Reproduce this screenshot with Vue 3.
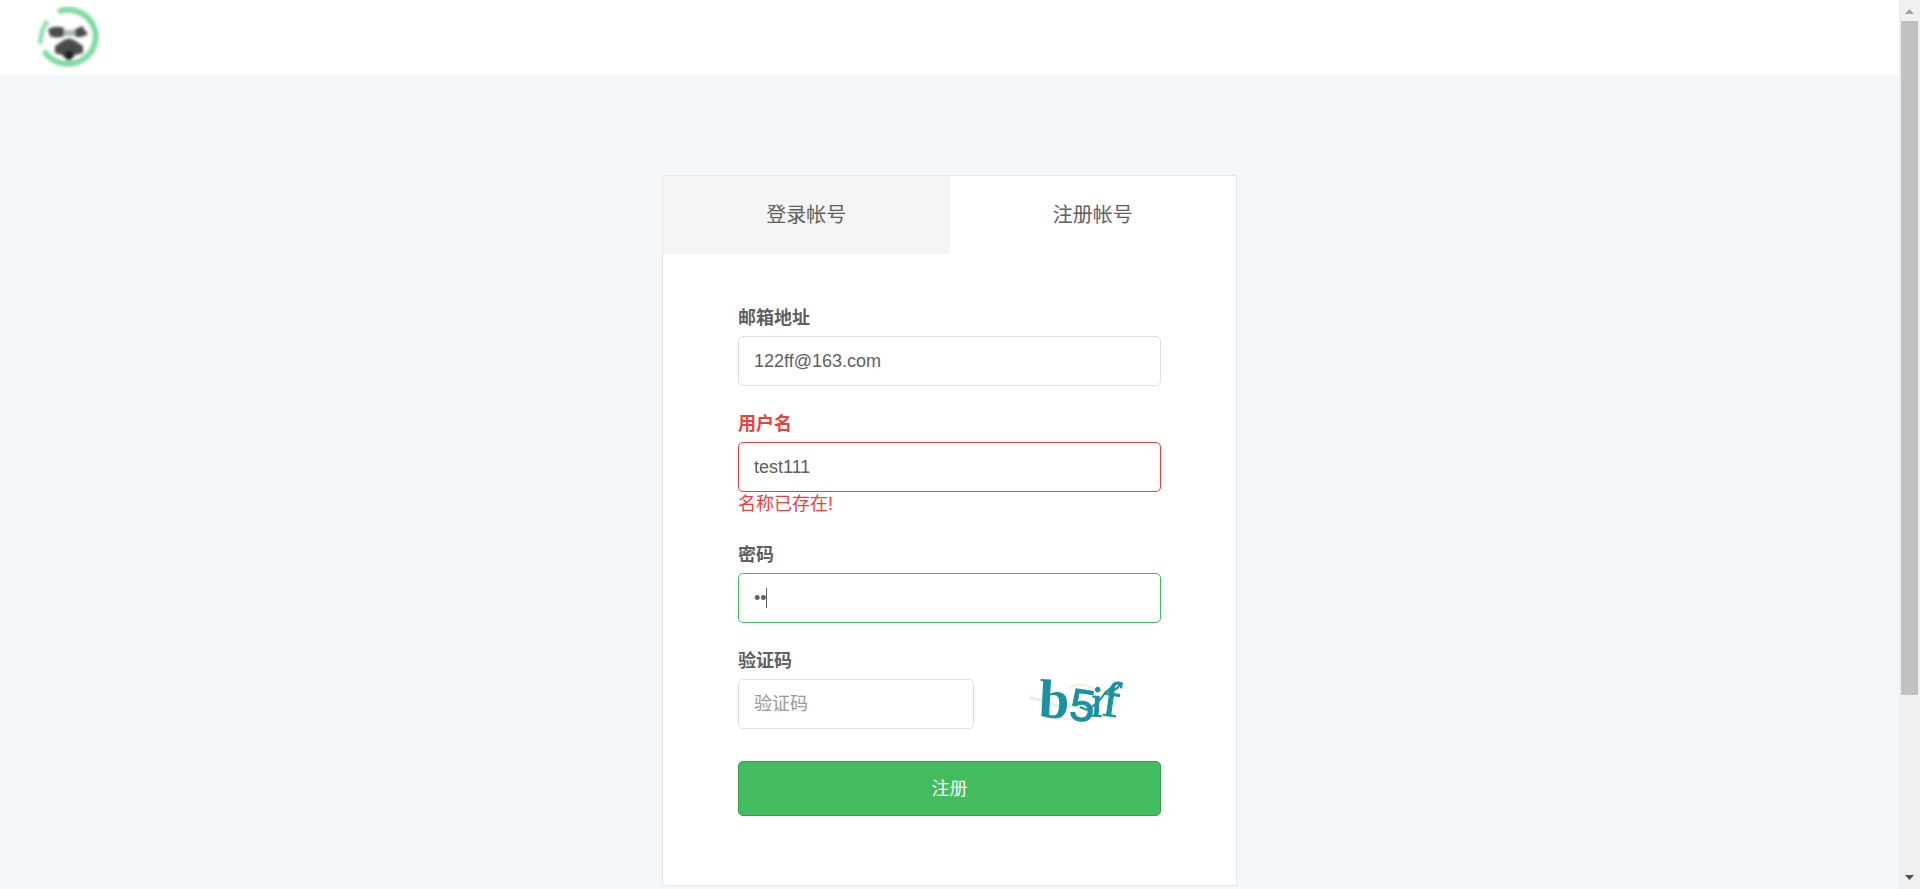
<script setup>
import { ref } from 'vue'

const email = ref('122ff@163.com')
const username = ref('test111')
const password = ref('12')
const code = ref('')
</script>

<template>
  <div class="shell">
    <div class="page">
      <header class="topbar">
        <a class="logo" href="#" aria-label="首页">
          <svg width="64" height="64" viewBox="0 1 64 64" aria-hidden="true">
            <defs>
              <filter id="soft" x="-20%" y="-20%" width="140%" height="140%">
                <feGaussianBlur stdDeviation="1.7" />
              </filter>
            </defs>
            <g filter="url(#soft)">
              <path d="M22 6.500A28 27 0 1 1 8 46" fill="none" stroke="#7fdaa4" stroke-width="6" />
              <path d="M11.500 16Q5 24 4 39" fill="none" stroke="#96e0b4" stroke-width="5" />
              <path d="M12 24Q20 20 28 23V31Q21 34 14 31Z" fill="#4c4c4c" />
              <path d="M38 25L46 21L52 29Q46 34 38 31Z" fill="#4c4c4c" />
              <path d="M28 25H39V31H28Z" fill="#a9bdb0" />
              <path d="M25 37Q33 30 41 37L47 41V48L39 50L35 55H31L26 50L19 48V41Z" fill="#4c4c4c" />
              <path d="M29 46H37V52L33 56L29 52Z" fill="#1c1c1c" />
            </g>
          </svg>
        </a>
      </header>

      <main class="main">
        <section class="card">
          <nav class="tabs">
            <button type="button" class="tab idle">登录帐号</button>
            <button type="button" class="tab">注册帐号</button>
          </nav>
          <form class="form" @submit.prevent>
            <div class="group">
              <label for="email">邮箱地址</label>
              <input id="email" v-model="email" type="text" />
            </div>
            <div class="group error">
              <label for="username">用户名</label>
              <input id="username" v-model="username" type="text" />
              <p class="message">名称已存在!</p>
            </div>
            <div class="group active">
              <label for="password">密码</label>
              <div class="field">
                <input id="password" v-model="password" type="password" />
                <span class="caret"></span>
              </div>
            </div>
            <div class="group">
              <label for="code">验证码</label>
              <div class="row">
                <input id="code" v-model="code" type="text" placeholder="验证码" />
                <div class="captcha">
                  <svg width="100" height="50" viewBox="0 0 100 50" role="img" aria-label="验证码图片">
                    <defs>
                      <filter id="edge"><feGaussianBlur stdDeviation="0.4" /></filter>
                    </defs>
                    <path d="M12 19Q24 20 31 24T52 27Q70 29 78 33" fill="none" stroke="#d9f5dd" stroke-width="3" />
                    <path d="M52 9Q62 3 72 8T92 13" fill="none" stroke="#f5f3cf" stroke-width="2" />
                    <g filter="url(#edge)" fill="#1f919f" stroke="#1f919f">
                      <text x="20" y="38" class="serif" font-size="55" stroke-width="0" transform="rotate(3 20 38)">b</text>
                      <text x="50" y="40" class="sans" font-size="45" stroke-width="1" transform="rotate(8 50 40)">5</text>
                      <text x="72" y="37" class="serif thin" font-size="44" stroke-width="1" transform="rotate(4 72 37)">i</text>
                      <text x="83" y="36" class="serif thin" font-size="50" stroke-width="1" transform="rotate(8 83 36)">f</text>
                      <path d="M62 28L69 31Q80 25 87 14L95 7Q101 2 101 6Q100 11 92 12L87 13" fill="none" stroke-width="2" />
                    </g>
                  </svg>
                </div>
              </div>
            </div>
            <button type="submit" class="submit">注册</button>
          </form>
        </section>
      </main>
    </div>

    <div class="scrollbar" aria-hidden="true">
      <svg class="arrow" width="21" height="21" viewBox="0 0 21 21"><path d="M6 14L10.500 9L15 14Z" fill="#a3a3a3" /></svg>
      <div class="track"><div class="thumb"></div></div>
      <svg class="arrow" width="21" height="21" viewBox="0 0 21 21"><path d="M6 7H15L10.500 12Z" fill="#505050" /></svg>
    </div>
  </div>
</template>

<style>
body {
  margin: 0;
  background: #f4f8fb;
}
</style>

<style scoped>
.shell {
  display: flex;
  min-height: 100vh;
  background: #f4f8fb;
  color: #606060;
  font-family: "Liberation Sans", "Noto Sans CJK SC", sans-serif;
  font-size: 18px;
  line-height: 24px;
}
.shell * {
  box-sizing: border-box;
}
.page {
  flex: 1;
  min-width: 0;
}
.topbar {
  display: flex;
  align-items: center;
  height: 75px;
  padding: 0 36px;
  background: #fff;
}
.logo {
  display: flex;
}
.main {
  display: flex;
  justify-content: center;
  padding: 100px 16px 0;
}
.card {
  width: 100%;
  max-width: 575px;
  border: 1px solid #e2eaf0;
  background: #fff;
}
.tabs {
  display: flex;
}
button,
input {
  margin: 0;
  font: inherit;
  color: inherit;
}
.tab {
  flex: 1;
  height: 78px;
  padding: 0;
  border: 0;
  background: #fff;
  font-size: 20px;
}
.idle {
  background: #f4f4f4;
}
.form {
  padding: 52px 75px 69px;
}
.group {
  margin-bottom: 26px;
}
label {
  display: block;
  margin-bottom: 6px;
  font-weight: 700;
}
input {
  display: block;
  width: 100%;
  height: 50px;
  padding: 0 15px;
  border: 1px solid #e0e0e0;
  border-radius: 5px;
  outline: 0;
  background: #fff;
}
input::placeholder {
  color: #999;
  opacity: 1;
}
.error label,
.message {
  color: #ee3d3d;
}
.error input {
  border-color: #ee3d3d;
}
.message {
  margin: 0;
  line-height: 25px;
}
.active input {
  border-color: #43bc60;
}
.field {
  position: relative;
}
.caret {
  position: absolute;
  left: 28px;
  top: 15px;
  width: 1px;
  height: 20px;
  background: #606060;
}
.row {
  display: flex;
}
.row input {
  flex: 0 0 236px;
}
.captcha {
  display: flex;
  flex: 1;
  justify-content: center;
}
.captcha svg {
  overflow: visible;
}
.serif {
  font-family: "Liberation Serif", serif;
  font-weight: 700;
}
.thin {
  font-weight: 400;
}
.sans {
  font-family: "Liberation Sans", sans-serif;
}
.submit {
  display: block;
  width: 100%;
  height: 55px;
  margin-top: 32px;
  padding: 0;
  border: 1px solid #389d50;
  border-radius: 5px;
  background: #43bc60;
  color: #fff;
}
.scrollbar {
  position: sticky;
  top: 0;
  display: flex;
  flex-direction: column;
  width: 21px;
  height: 100vh;
  background: #f0f0f0;
}
.arrow {
  display: block;
}
.track {
  flex: 1;
  padding: 0 2px;
}
.thumb {
  height: 79.6%;
  background: #c1c1c1;
}
</style>
